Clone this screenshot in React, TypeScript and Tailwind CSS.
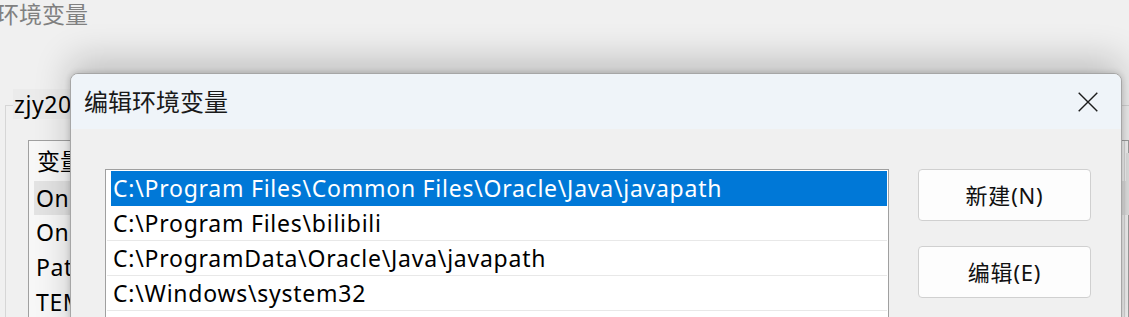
import React from "react";

const FONT = { fontFamily: '"Noto Sans", "Noto Sans CJK SC", sans-serif' };

const paths = [
  "C:\\Program Files\\Common Files\\Oracle\\Java\\javapath",
  "C:\\Program Files\\bilibili",
  "C:\\ProgramData\\Oracle\\Java\\javapath",
  "C:\\Windows\\system32",
  "",
];

export default function App() {
  return (
    <div
      className="relative w-[1129px] h-[317px] overflow-hidden bg-[#f0f0f0] text-black"
      style={FONT}
    >
      {/* background window */}
      <div className="flex flex-col">
        <div className="h-[40px] flex items-start">
          <span className="ml-[-4px] mt-[-1px] text-[23px] leading-[30px] text-[#808080]">环境变量</span>
        </div>
        <div className="relative mt-[65px] ml-[5px] border-l border-t border-[#d6d6d6] h-[300px]">
          <span className="absolute left-[7px] top-[-17px] bg-[#ebebeb] px-[1px] text-[23px] tracking-[0.6px] leading-[30px]">
            zjy20
          </span>
          <div className="ml-[22px] mt-[34px] border border-[#a0a0a0] bg-[#f7f7f7] h-[250px] flex flex-col">
            <div className="h-[40px] flex items-center pl-[8px] text-[23px]">变量</div>
            <div className="h-[34px] ml-[5px] flex items-center pl-[2px] bg-[#e3e3e3] text-[23px] tracking-[0.6px]">OneDrive</div>
            <div className="h-[35px] ml-[5px] flex items-center pl-[2px] text-[23px] tracking-[0.6px]">OneDriveConsumer</div>
            <div className="h-[35px] ml-[5px] flex items-center pl-[2px] text-[23px] tracking-[0.6px]">Path</div>
            <div className="h-[35px] ml-[5px] flex items-center pl-[2px] text-[23px] tracking-[0.6px]">TEMP</div>
          </div>
        </div>
      </div>
      {/* right strip details of bg window */}
      <div className="absolute left-[1124px] top-[141px] w-[5px] h-[176px] border-l border-[#dadada]">
        <div className="mt-[12px] ml-[1px] h-[62px] bg-[#e4e4e4]" />
      </div>

      {/* dialog */}
      <div className="absolute left-[70px] top-[73px] w-[1052px] h-[270px] rounded-t-[8px] border border-[#a6a6a6] bg-[#f0f0f0] overflow-hidden shadow-[0_-14px_36px_rgba(0,0,0,0.2),0_0_6px_rgba(0,0,0,0.18)] flex flex-col">
        <div className="h-[55px] bg-[#eff4f9] flex items-center justify-between pl-[13px] pr-[23px] shrink-0">
          <span className="text-[24px] leading-none text-[#1a1a1a]">编辑环境变量</span>
          <svg width="20" height="20" viewBox="0 0 20 20" className="mt-[1px]">
            <path d="M0.7 0.7 L19.3 19.3 M19.3 0.7 L0.7 19.3" stroke="#1c1c1c" strokeWidth="1.4" fill="none" />
          </svg>
        </div>
        <div className="flex pt-[40px] pl-[34px]">
          <div className="w-[784px] h-[200px] border border-[#a0a0a0] bg-white pt-[1px] px-[1px]">
            {paths.map((p, i) =>
              i === 0 ? (
                <div key={i} className="h-[35px] ml-[4px] bg-[#0078d7] text-white flex items-center pl-[2px] text-[23px] tracking-[0.75px] whitespace-nowrap">
                  {p}
                </div>
              ) : (
                <div key={i} className="h-[35px] border-b border-[#e8e8e8] flex items-center pl-[6px] text-[23px] tracking-[0.75px] whitespace-nowrap">
                  {p}
                </div>
              )
            )}
          </div>
          <div className="ml-[29px] flex flex-col gap-[25px]">
            <button className="w-[173px] h-[52px] rounded-[4px] border border-[#d0d0d0] bg-[#fdfdfd] text-[22px] tracking-[0.8px] text-[#111111]">
              新建(N)
            </button>
            <button className="w-[173px] h-[52px] rounded-[4px] border border-[#d0d0d0] bg-[#fdfdfd] text-[22px] tracking-[0.8px] text-[#111111]">
              编辑(E)
            </button>
          </div>
        </div>
      </div>
    </div>
  );
}
